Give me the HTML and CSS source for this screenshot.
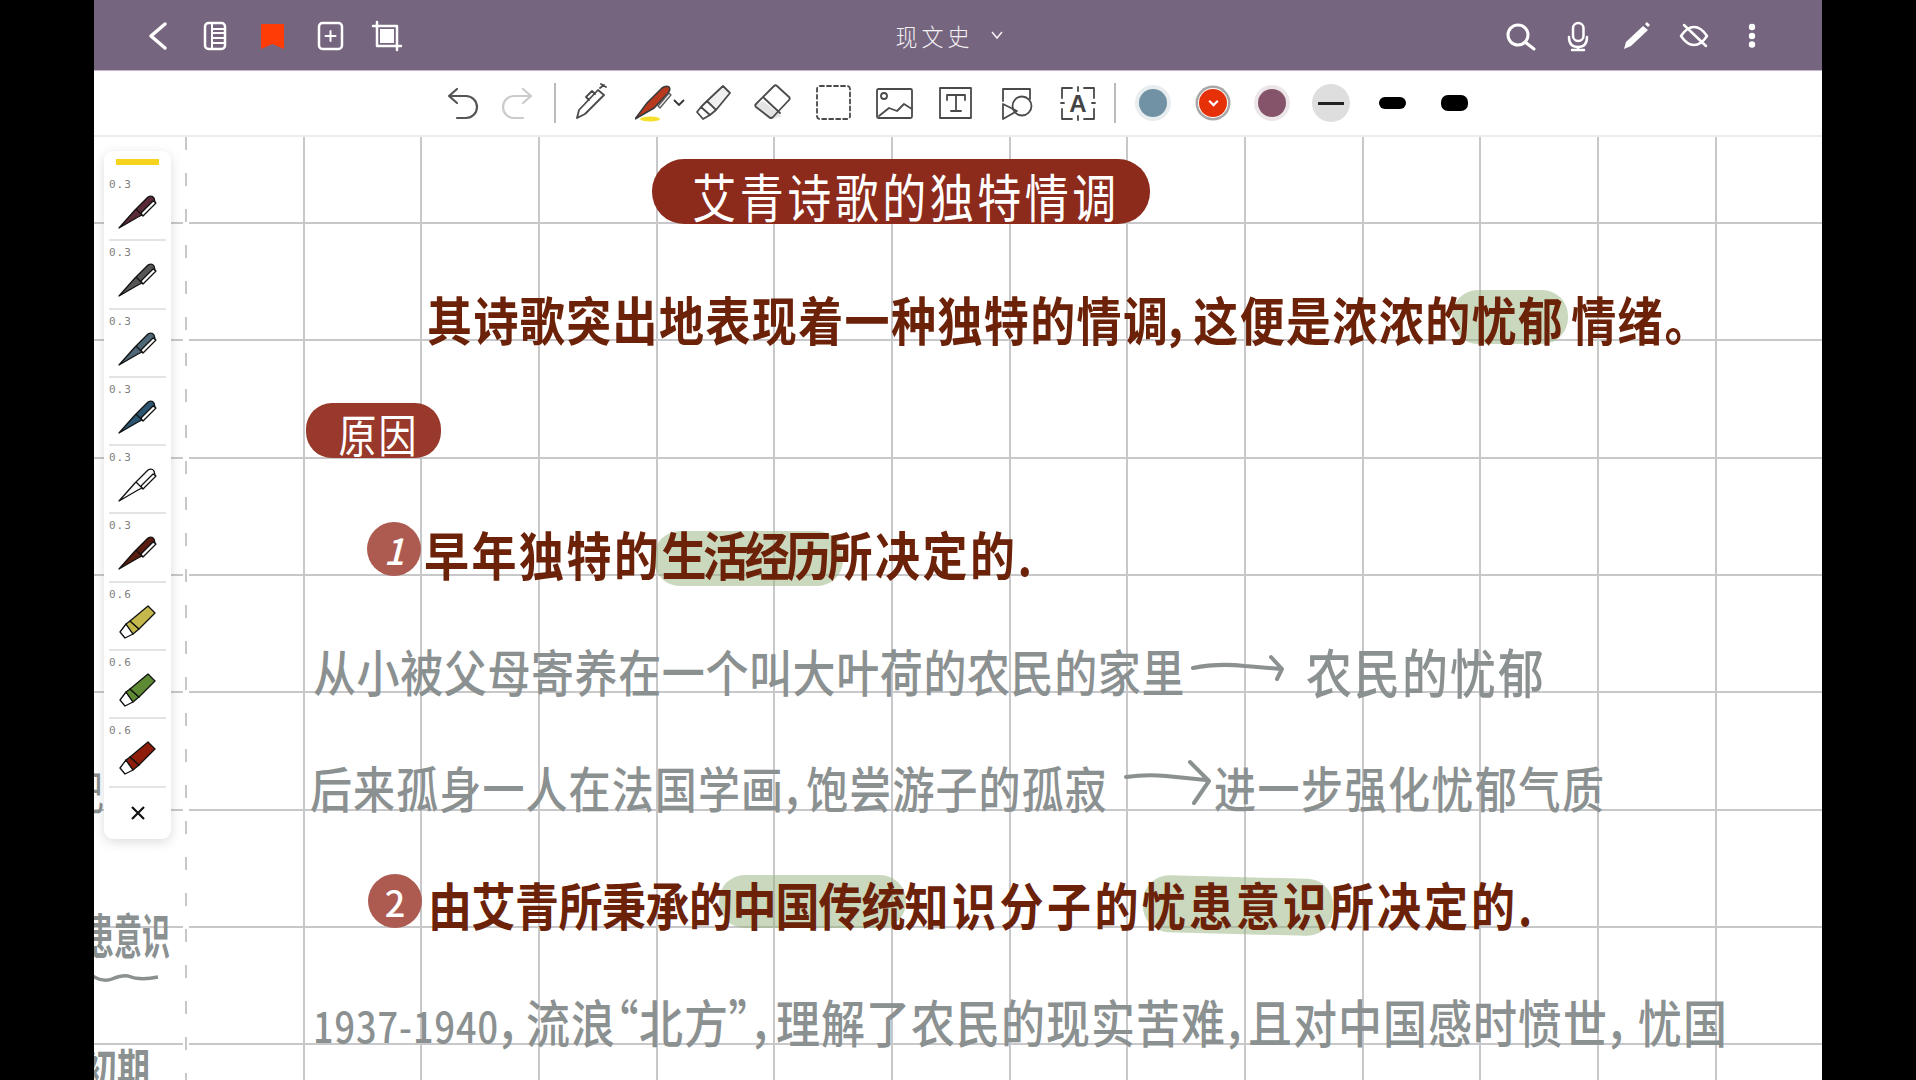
FILE: index.html
```html
<!DOCTYPE html>
<html lang="zh-CN">
<head>
<meta charset="utf-8">
<title>现文史</title>
<link rel="stylesheet" href="styles.css">
</head>
<body>
<div class="page">
  <header class="topbar">
    <div class="top-left">
      <svg class="ti" viewBox="0 0 34 34"><path d="M25 6 11 18l14 12" class="w35"/></svg>
      <svg class="ti" viewBox="0 0 34 34"><rect x="7" y="5" width="20" height="26" rx="3.500" class="w25"/><path d="M14 5v26M14 11h13M14 15h13M14 20h13M14 25h13" class="w2"/></svg>
      <svg class="ti" viewBox="0 0 34 34"><path d="M6 7q0-1 1-1h21q1 0 1 1v24l-11.500-5L6 31z" fill="#ff3b06"/></svg>
      <svg class="ti" viewBox="0 0 34 34"><rect x="6" y="5" width="23" height="26" rx="3.500" class="w25"/><path d="M17.500 13v10M12.500 18h10" class="w2"/></svg>
      <svg class="ti" viewBox="0 0 34 34"><path d="M7 4v24h24M3 8h24v24" class="w25"/><rect x="10" y="11" width="14" height="14" fill="#fff"/></svg>
    </div>
    <div class="doc-title"><span>现文史</span><svg class="chev" viewBox="0 0 14 10"><path d="M2 2l5 6 5-6"/></svg></div>
    <div class="top-right">
      <svg class="ti" viewBox="0 0 34 34"><circle cx="15" cy="17" r="10" class="w3"/><path d="M22 24l9 7" class="w3"/></svg>
      <svg class="ti" viewBox="0 0 34 34"><rect x="12" y="5" width="10.500" height="18" rx="5.200" class="w25"/><path d="M8 19q0 10 9 10t9-10M17 29v2M11 32h12" class="w25"/></svg>
      <svg class="ti" viewBox="0 0 34 34"><path d="M5 31l2-7L24 8l5 4-17 16zM26 6l2-2 3 3-2 2z" fill="#fff"/></svg>
      <svg class="ti" viewBox="0 0 34 34"><path d="M4 18q6-9 13-9t13 9q-6 9-13 9T4 18z" class="w25"/><path d="M7 7l22 21" class="w25"/></svg>
      <svg class="ti" viewBox="0 0 34 34"><circle cx="17" cy="9" r="3.200" fill="#fff"/><circle cx="17" cy="18" r="3.200" fill="#fff"/><circle cx="17" cy="26.500" r="3.200" fill="#fff"/></svg>
    </div>
  </header>

  <nav class="toolbar">
    <div class="tool-group undo-group">
      <svg class="tool" viewBox="0 0 40 40"><path d="M7 13h17a11 11 0 0 1 0 22h-9M15 6l-8 7 8 7" class="u"/></svg>
      <svg class="tool redo" viewBox="0 0 40 40"><path d="M33 13H16a11 11 0 0 0 0 22h9M25 6l8 7-8 7" class="u"/></svg>
    </div>
    <span class="sep"></span>
    <div class="tool-group main-group">
      <svg class="tool" viewBox="0 0 40 40"><path d="M5 35l2-8L26 7l6 5-19 19zM17 17l-3-3 6-6 3 3M28 5l4-3M29 1l5 3" class="k"/></svg>
      <svg class="tool tool-red" viewBox="0 0 50 40"><ellipse cx="15" cy="36" rx="10" ry="2.500" fill="#f6df2a"/><path d="M0 36 12 20 27 5q4-3 7-1 2 2-1 6L19 25z" fill="#b83a1e" stroke="#3a3a3a" stroke-width="1.600"/><path d="M34 10 23 23l2 2 11-13z" fill="#e8e8e8" stroke="#555" stroke-width="1.200"/><path d="M39 17l5 5 5-5" class="k2"/></svg>
      <svg class="tool" viewBox="0 0 40 40"><path d="M15 18 31 3l7 7-14 17z" fill="#f0f0f0"/><path d="M15 18 31 3l7 7-14 17zM15 18l-6 6 9 8 6-5M9 24l-4 5 6 7 7-4" class="k"/></svg>
      <svg class="tool" viewBox="0 0 40 40"><path d="M10 18 29 33l-9 3h-4L3 25q-1-2 .5-3.500z" fill="#e4e4e4"/><path d="M21 3q1.500-1.500 3 0l12 11q1.500 1.500 0 3L20 34q-2 2-4 0L3 24q-1.500-1.500 0-3zM11 15l16 15" class="k"/></svg>
      <svg class="tool" viewBox="0 0 40 40"><rect x="3" y="3" width="33" height="33" rx="3" class="k dash"/></svg>
      <svg class="tool" viewBox="0 0 40 40"><rect x="2" y="6" width="35" height="29" rx="1.500" class="k"/><circle cx="9" cy="13" r="3" class="k"/><path d="M4 33l10-8 8 3 7-7 8 5" class="k"/></svg>
      <svg class="tool" viewBox="0 0 40 40"><rect x="4" y="5" width="31" height="30" class="k"/><path d="M11 17v-5h18v5M20 12v16M15 28h10" class="k"/></svg>
      <svg class="tool" viewBox="0 0 40 40"><path d="M6 18V6h27v10M6 21v15l14-8z" class="k"/><circle cx="25" cy="23" r="9.500" class="k"/></svg>
      <svg class="tool" viewBox="0 0 40 40"><path d="M4 15V5h10M26 5h10v10M4 26v10h10M26 36h10V26M20 4v4M20 33v4M3 20h3M34 20h3" class="k"/><text x="20" y="29" class="tool-a">A</text></svg>
    </div>
    <span class="sep"></span>
    <div class="swatches">
      <span class="sw sw-blue"></span>
      <span class="sw sw-red"><svg viewBox="0 0 12 8"><path d="M2 1.500l4 4 4-4"/></svg></span>
      <span class="sw sw-plum"></span>
      <span class="stroke-sel"><i></i></span>
      <span class="stroke s2"></span>
      <span class="stroke s3"></span>
    </div>
  </nav>

  <main class="canvas">
    <div class="margin-line"></div>

    <span class="hl hl-a"></span>
    <span class="hl hl-b"></span>
    <span class="hl hl-c"></span>
    <span class="hl hl-d"></span>

    <div class="pill pill-title"><span>艾青诗歌的独特情调</span></div>
    <div class="pill pill-reason"><span>原因</span></div>
    <div class="num num-1">1</div>
    <div class="num num-2">2</div>

    <p class="ink line-1">其诗歌突出地表现着一种独特的情调，这便是浓浓的忧<span class="wide-y">郁</span>情绪。</p>
    <p class="ink line-2">早年独特的<span class="tight-l2">生活经历</span>所决定的.</p>
    <p class="ink line-3"><span class="l3a">由艾青所秉承的</span><span class="l3b">中国传统</span><span class="l3c">知识分子的</span>忧患意识所决定的.</p>

    <p class="pencil g1a">从小被父母寄养在一个叫大叶荷的农民的家里</p>
    <svg class="arrow ar1" viewBox="0 0 100 30"><path d="M2 16q24-5 52-2l36 3M80 5l11 12-5 10"/></svg>
    <p class="pencil g1b">农民的忧郁</p>

    <p class="pencil g2a">后来孤身一人在法国学画，饱尝游子的孤寂</p>
    <svg class="arrow ar2" viewBox="0 0 90 46"><path d="M2 18q20-3 40-1l40 4M66 3l19 19-15 22"/></svg>
    <p class="pencil g2b">进一步强化忧郁气质</p>

    <p class="pencil g3"><span class="digits">1937-1940</span><span class="cg">，</span>流浪“北方”<span class="cg cg-w">，</span>理解了农民的现实苦难<span class="cg cg-n">，</span>且对中国感时愤世<span class="cg cg-l">，</span>忧国</p>

    <p class="pencil edge e1">纪</p>
    <p class="pencil edge e2">忧患意识</p>
    <svg class="wave" viewBox="0 0 70 14"><path d="M0 3q12 9 22 5t16-3q12 5 30 1"/></svg>
    <p class="pencil edge e3">初期</p>

    <aside class="pens">
      <div class="pen-yellow"></div>
      <div class="pen-row"><small>0.3</small><svg class="pen" viewBox="0 0 40 36"><use href="#ballpen" fill="#5a2a36"/></svg></div>
      <div class="pen-row"><small>0.3</small><svg class="pen" viewBox="0 0 40 36"><use href="#ballpen" fill="#565656"/></svg></div>
      <div class="pen-row"><small>0.3</small><svg class="pen" viewBox="0 0 40 36"><use href="#ballpen" fill="#4f6878"/></svg></div>
      <div class="pen-row"><small>0.3</small><svg class="pen" viewBox="0 0 40 36"><use href="#ballpen" fill="#2c5572"/></svg></div>
      <div class="pen-row"><small>0.3</small><svg class="pen" viewBox="0 0 40 36"><use href="#ballpen" fill="#fafafa"/></svg></div>
      <div class="pen-row"><small>0.3</small><svg class="pen" viewBox="0 0 40 36"><use href="#ballpen" fill="#571d10"/></svg></div>
      <div class="pen-row"><small>0.6</small><svg class="pen" viewBox="0 0 40 36"><use href="#marker" fill="#c4b84c"/></svg></div>
      <div class="pen-row"><small>0.6</small><svg class="pen" viewBox="0 0 40 36"><use href="#marker" fill="#5d8a33"/></svg></div>
      <div class="pen-row"><small>0.6</small><svg class="pen" viewBox="0 0 40 36"><use href="#marker" fill="#8f1d0c"/></svg></div>
      <div class="pen-close"><svg viewBox="0 0 16 16"><path d="M2 2l12 12M14 2 2 14"/></svg></div>
    </aside>
  </main>
</div>

<svg class="defs" width="0" height="0">
  <defs>
    <g id="ballpen" stroke="#111" stroke-width="1.300" stroke-linejoin="round">
      <path d="M1 33 17 15 30 2q4-2 6 1l1 4-13 13-4 2z"/>
      <path d="M18 14l7 7" fill="none"/>
      <path d="M38 8 25 21l-2-3L35 6z" fill="#fff"/>
    </g>
    <g id="marker" stroke="#111" stroke-width="1.300" stroke-linejoin="round">
      <path d="M8 19l-6 8 5 6 8-4z" fill="#fff"/>
      <path d="M12 16l-4 3 7 10 6-5z"/>
      <path d="M12 16 30 1l7 7-16 16z"/>
    </g>
  </defs>
</svg>
</body>
</html>
```
FILE: styles.css
```css
* { box-sizing: border-box; }
html, body { margin: 0; height: 100%; background: #000; }
body { overflow: hidden; font-family: "Noto Sans CJK SC", "Noto Sans", sans-serif; }
p { margin: 0; }
.page { width: 1728px; height: 1080px; margin-left: 94px; background: #fff; display: flex; flex-direction: column; overflow: hidden; position: relative; }

.topbar { height: 71px; flex: none; background: #75657e; border-bottom: 1px solid #c3b6cb; display: grid; grid-template-columns: 1fr auto 1fr; align-items: center; padding: 0 53px 0 46px; }
.top-left, .top-right { display: flex; align-items: center; gap: 23.500px; }
.top-right { justify-content: flex-end; gap: 24px; }
.ti { width: 34px; height: 34px; display: block; }
.w2, .w25, .w3, .w35 { fill: none; stroke: #fff; stroke-linecap: round; stroke-linejoin: round; }
.w2 { stroke-width: 2; }
.w25 { stroke-width: 2.500; }
.w3 { stroke-width: 3; }
.w35 { stroke-width: 3.500; }
.doc-title { color: #f4f0f4; font-size: 22px; letter-spacing: 4px; display: flex; align-items: center; gap: 16px; transform: translateX(-5px); font-weight: 300; }
.doc-title span { display: inline-block; transform: scaleY(1.1); }
.chev { width: 14px; height: 10px; fill: none; stroke: #f4f0f4; stroke-width: 1.500; }

.toolbar { height: 66px; flex: none; background: #fff; border-bottom: 2px solid #ececec; display: flex; align-items: center; padding-left: 348px; gap: 16px; }
.tool-group { display: flex; align-items: center; }
.undo-group { gap: 16px; }
.main-group { gap: 21px; }
.tool { width: 40px; height: 40px; flex: none; display: block; }
.tool-red { width: 50px; margin: 0 -14px 0 2px; }
.redo { opacity: .3; }
.u { fill: none; stroke: #555; stroke-width: 2.200; stroke-linejoin: round; stroke-linecap: round; }
.k { fill: none; stroke: #4a4a4a; stroke-width: 1.800; stroke-linejoin: round; stroke-linecap: round; }
.k2 { fill: none; stroke: #333; stroke-width: 1.800; }
.dash { stroke-dasharray: 4 3; }
.tool-a { font: 700 24px "Liberation Sans", sans-serif; text-anchor: middle; fill: #444; }
.sep { width: 2px; height: 40px; background: #bbb; flex: none; }
.sep + .swatches { margin-left: 7px; }
.swatches { display: flex; align-items: center; }
.sw { width: 28px; height: 28px; border-radius: 50%; display: flex; align-items: center; justify-content: center; flex: none; }
.sw-blue { background: #7092a4; box-shadow: 0 0 0 4px #e8edf0; }
.sw-red { background: #e63008; box-shadow: 0 0 0 1px #fff, 0 0 0 3.500px #a8a8a8; margin-left: 32px; }
.sw-plum { background: #85546a; box-shadow: 0 0 0 4px #ece6e9; margin-left: 31px; }
.sw-red svg { width: 13px; height: 9px; fill: none; stroke: #fff; stroke-width: 2; }
.stroke-sel { width: 38px; height: 38px; border-radius: 50%; background: #dedede; display: flex; align-items: center; justify-content: center; margin-left: 26px; flex: none; }
.stroke-sel i { width: 26px; height: 3px; background: #222; display: block; }
.stroke { background: #000; display: block; width: 27px; flex: none; }
.s2 { height: 12px; border-radius: 6px; margin-left: 29px; }
.s3 { height: 16px; border-radius: 7px; margin-left: 35px; }

.canvas { flex: 1; position: relative; background-color: #fff;
  background-image:
    repeating-linear-gradient(to right, transparent 0 91px, #c8c8ca 91px 93px, transparent 93px 117.670px),
    repeating-linear-gradient(to bottom, transparent 0 85px, #c8c8ca 85px 87px, transparent 87px 117.350px);
}
.margin-line { position: absolute; left: 91px; top: 0; bottom: 0; width: 2px; background: repeating-linear-gradient(to bottom, #c8c8c8 0 13px, #fff 13px 36px); box-shadow: -2px 0 0 #fff, 2px 0 0 #fff; }

.hl { position: absolute; background: rgba(150,178,125,.5); border-radius: 26px; }
.hl-a { left: 1358px; top: 153px; width: 116px; height: 54px; }
.hl-b { left: 560px; top: 394px; width: 189px; height: 55px; }
.hl-c { left: 625px; top: 738px; width: 187px; height: 53px; }
.hl-d { left: 1049px; top: 740px; width: 190px; height: 57px; transform: rotate(1.500deg); }

.pill { position: absolute; color: #fff; display: flex; align-items: center; justify-content: center; white-space: nowrap; font-weight: 400; }
.pill span { display: inline-block; }
.pill-title { left: 558px; top: 22px; width: 498px; height: 65px; background: #8c2a1c; border-radius: 32px; font-size: 44px; letter-spacing: 3.500px; }
.pill-title span { transform: translate(5px, 4px) scaleY(1.18); }
.pill-reason { left: 212px; top: 266px; width: 135px; height: 55px; background: #98392b; border-radius: 26px; font-size: 38px; letter-spacing: 2px; }
.pill-reason span { transform: translate(5px, 3px) scaleY(1.2); }
.num { position: absolute; width: 54px; height: 54px; border-radius: 50%; background: #ad5a50; color: #fff; display: flex; align-items: center; justify-content: center; font-size: 36px; font-weight: 500; }
.num-1 { left: 273px; top: 385px; font-style: italic; }
.num-2 { left: 274px; top: 737px; }

.ink, .pencil { position: absolute; white-space: nowrap; line-height: 1; font-feature-settings: "palt"; transform: scaleY(1.16); }
.ink { color: #6b2208; font-weight: 700; }
.pencil { color: #8b9091; font-weight: 500; }
.line-1 { left: 333px; top: 159px; font-size: 45px; letter-spacing: 1.400px; }
.wide-y { letter-spacing: 8px; }
.line-2 { left: 330px; top: 394px; font-size: 45px; letter-spacing: 2.500px; }
.tight-l2 { letter-spacing: -3.500px; }
.line-3 { left: 334px; top: 745px; font-size: 44px; letter-spacing: 3px; }
.l3a { letter-spacing: -.5px; }
.l3b { letter-spacing: -1px; }
.l3c { letter-spacing: 3.500px; }
.g1a { left: 219px; top: 512px; font-size: 43px; letter-spacing: .6px; }
.g1b { left: 1212px; top: 511px; font-size: 46px; letter-spacing: 2px; }
.g2a { left: 216px; top: 629px; font-size: 42px; letter-spacing: 1.100px; }
.g2b { left: 1120px; top: 629px; font-size: 42px; letter-spacing: 1.500px; }
.g3 { left: 219px; top: 862px; font-size: 44px; letter-spacing: 1px; }
.digits { font-size: 36px; letter-spacing: 1px; }
.cg { letter-spacing: 5px; }
.cg-w { letter-spacing: 2px; }
.cg-n { letter-spacing: 0; }
.cg-l { letter-spacing: 8px; }
.edge { font-weight: 700; }
.e1 { left: -30px; top: 633px; font-size: 40px; font-weight: 400; }
.e2 { left: -36px; top: 783px; font-size: 28px; transform: scaleY(1.7); }
.e3 { left: -10px; top: 916px; font-size: 33px; transform: scaleY(1.4); }
.arrow { position: absolute; fill: none; stroke: #8b9091; stroke-width: 4; stroke-linecap: round; stroke-linejoin: round; }
.ar1 { left: 1097px; top: 515px; width: 100px; height: 30px; }
.ar2 { left: 1030px; top: 622px; width: 90px; height: 46px; }
.wave { position: absolute; left: -4px; top: 834px; width: 70px; height: 14px; fill: none; stroke: #8b9091; stroke-width: 3.500; }

.pens { position: absolute; left: 10px; top: 14px; width: 67px; height: 688px; background: #fff; border-radius: 9px; box-shadow: 0 3px 12px rgba(0,0,0,.14); display: flex; flex-direction: column; padding: 8px 5px 0; }
.pen-yellow { width: 43px; height: 6px; background: #f6d31c; align-self: center; flex: none; margin-bottom: 8px; }
.pen-row { height: 68.300px; flex: none; border-bottom: 2px solid #e4e4e4; display: flex; flex-direction: column; }
.pen-row small { font: 11px "DejaVu Sans Mono", monospace; color: #808080; letter-spacing: 1px; line-height: 12px; padding-top: 6px; }
.pen { width: 40px; height: 36px; margin-top: 4px; margin-left: 9px; display: block; flex: none; }
.pen-close { flex: 1; display: flex; align-items: center; justify-content: center; }
.pen-close svg { width: 16px; height: 16px; fill: none; stroke: #111; stroke-width: 2.200; }
.defs { position: absolute; }
```
